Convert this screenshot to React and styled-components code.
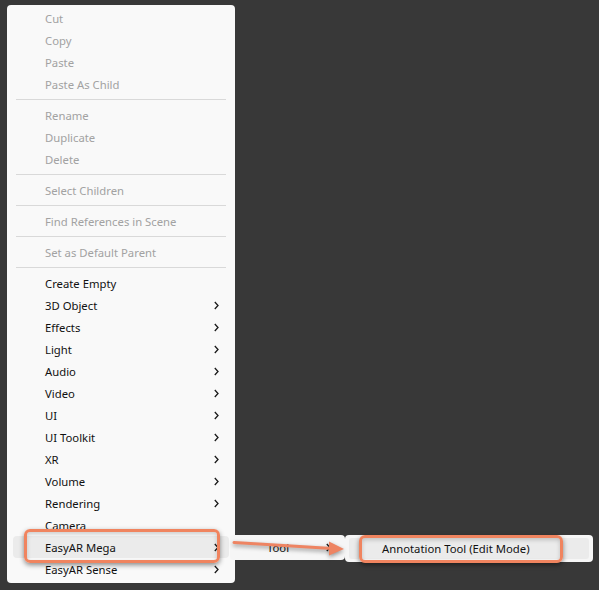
import React from 'react';
import styled, { createGlobalStyle } from 'styled-components';

const GlobalStyle = createGlobalStyle`
    html, body {
        margin: 0;
        padding: 0;
        background: #383838;
    }
    body {
        font-family: "Noto Sans", "Open Sans", sans-serif;
        font-size: 11.3px;
    }
`;

const Stage = styled.div`
    position: relative;
    width: 599px;
    height: 590px;
    overflow: hidden;
`;

// 메인 컨텍스트 메뉴
const Menu = styled.div`
    margin: 5px 0 0 7px;
    width: 228px;
    padding: 2px 0 3px;
    box-sizing: border-box;
    background: #f9f9f9;
    border-radius: 4px;
    display: flex;
    flex-direction: column;
`;

const Row = styled.div`
    height: 22px;
    margin: 0 6px;
    padding: 0 10px 0 32px;
    display: flex;
    align-items: center;
    justify-content: space-between;
    border-radius: 4px;
    color: ${props => props.disabled ? '#a2a2a2' : '#111'};
    background: ${props => props.active ? '#ebebeb' : 'transparent'};
    white-space: nowrap;
`;

const Separator = styled.div`
    height: 9px;
    display: flex;
    align-items: center;
    padding: 0 9px;

    &::after {
        content: '';
        flex: 1;
        height: 1px;
        background: #d9d9d9;
    }
`;

const Popup = styled.div`
    position: absolute;
    left: ${props => props.x}px;
    top: ${props => props.y}px;
    width: ${props => props.w}px;
    height: ${props => props.h}px;
    box-sizing: border-box;
    padding: 3px 4px;
    background: #f6f6f6;
    border-radius: 4px;
    display: flex;
`;

const PopupRow = styled.div`
    flex: 1;
    display: flex;
    align-items: center;
    justify-content: space-between;
    padding: 0 ${props => props.pr}px 0 ${props => props.pl}px;
    border-radius: 3px;
    background: ${props => props.active ? '#ebebeb' : 'transparent'};
    color: #111;
    white-space: nowrap;
`;

// 주황색 강조 박스
const Callout = styled.div`
    position: absolute;
    left: ${props => props.x}px;
    top: ${props => props.y}px;
    width: ${props => props.w}px;
    height: ${props => props.h}px;
    box-sizing: border-box;
    border: 3px solid #f0845f;
    border-radius: 6px;
    box-shadow: 0 2px 5px rgba(0, 0, 0, 0.45), inset 0 2px 4px rgba(0, 0, 0, 0.18);
    pointer-events: none;
`;

const ArrowSvg = styled.svg`
    position: absolute;
    left: 0;
    top: 0;
    filter: drop-shadow(0 2px 2px rgba(0, 0, 0, 0.4));
    pointer-events: none;
`;

const Chevron = () => (
    <svg width="5" height="9" viewBox="0 0 5 9">
        <polyline points="0.8,1 4,4.5 0.8,8" fill="none" stroke="#1a1a1a" strokeWidth="1.3" />
    </svg>
);

const items = [
    { label: 'Cut', disabled: true },
    { label: 'Copy', disabled: true },
    { label: 'Paste', disabled: true },
    { label: 'Paste As Child', disabled: true },
    '-',
    { label: 'Rename', disabled: true },
    { label: 'Duplicate', disabled: true },
    { label: 'Delete', disabled: true },
    '-',
    { label: 'Select Children', disabled: true },
    '-',
    { label: 'Find References in Scene', disabled: true },
    '-',
    { label: 'Set as Default Parent', disabled: true },
    '-',
    { label: 'Create Empty' },
    { label: '3D Object', sub: true },
    { label: 'Effects', sub: true },
    { label: 'Light', sub: true },
    { label: 'Audio', sub: true },
    { label: 'Video', sub: true },
    { label: 'UI', sub: true },
    { label: 'UI Toolkit', sub: true },
    { label: 'XR', sub: true },
    { label: 'Volume', sub: true },
    { label: 'Rendering', sub: true },
    { label: 'Camera' },
    { label: 'EasyAR Mega', sub: true, active: true },
    { label: 'EasyAR Sense', sub: true },
];

const App = () => {
    return (
        <Stage>
            <GlobalStyle />
            <Menu>
                {items.map((item, idx) => {
                    if (item === '-') return <Separator key={idx} />;
                    return (
                        <Row key={idx} disabled={item.disabled} active={item.active}>
                            <span>{item.label}</span>
                            {item.sub && <Chevron />}
                        </Row>
                    );
                })}
            </Menu>

            <Popup x={230} y={535} w={115} h={25}>
                <PopupRow pl={33} pr={10}>
                    <span>Tool</span>
                    <Chevron />
                </PopupRow>
            </Popup>

            <Popup x={345} y={535} w={248} h={27}>
                <PopupRow active pl={33} pr={8}>
                    <span>Annotation Tool (Edit Mode)</span>
                </PopupRow>
            </Popup>

            <Callout x={24} y={529} w={196} h={34} />
            <Callout x={359} y={535} w={204} h={28} />

            <ArrowSvg width="599" height="590">
                <line x1="234" y1="542.5" x2="332" y2="548.5" stroke="#ee8462" strokeWidth="3" strokeLinecap="round" />
                <polygon points="329,541.5 344,549 329,555.5" fill="#ee8462" />
            </ArrowSvg>
        </Stage>
    );
};

export default App;
